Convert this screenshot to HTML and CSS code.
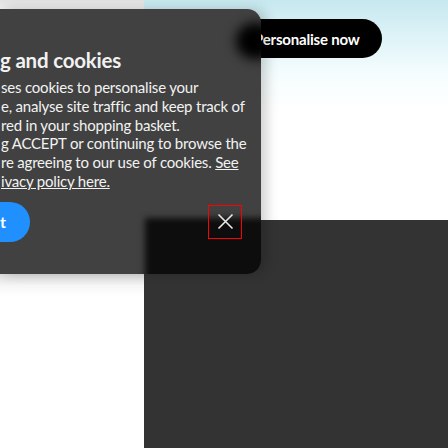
FILE: index.html
```html
<!DOCTYPE html>
<html lang="en">
<head>
<meta charset="utf-8">
<link rel="stylesheet" href="styles.css">
</head>
<body>
<div class="page">
  <div class="bg">
    <div class="bg-left">
      <div class="strip"></div>
      <div class="left-mid"></div>
      <div class="left-bottom"></div>
    </div>
    <div class="bg-right">
      <div class="right-top"></div>
      <div class="right-bottom"></div>
    </div>
  </div>

  <button class="pill">Personalise now</button>

  <section class="panel">
    <div class="blob"></div>
    <div class="shade"></div>
    <h2 class="title">g and cookies</h2>
    <p class="copy">ses cookies to personalise your<br>e, analyse site traffic and keep track of<br>red in your shopping basket.<br>g ACCEPT or continuing to browse the<br>re agreeing to our use of cookies. <a href="#">See</a><br><a href="#">ivacy policy here.</a></p>
    <div class="actions">
      <button class="accept">t</button>
      <button class="close" aria-label="Close">
        <svg width="17" height="17" viewBox="0 0 17 17"><path d="M1.5 1.5 L15.5 15.5 M15.5 1.5 L1.5 15.5" stroke="#e8e8e8" stroke-width="1.6" fill="none"/></svg>
      </button>
    </div>
  </section>
</div>
</body>
</html>
```

FILE: styles.css
```css
* { box-sizing: border-box; }
html, body { margin: 0; padding: 0; }
body { width: 448px; height: 448px; overflow: hidden; font-family: "Lato", "Open Sans", sans-serif; }

.page { position: relative; width: 448px; height: 448px; overflow: hidden; }

.bg { display: grid; grid-template-columns: 144px 1fr; height: 448px; }
.bg-left { display: flex; flex-direction: column; }
.strip { height: 9px; background: linear-gradient(#e2e2e2, #ececec); }
.left-mid { height: 265px; background: #414141; }
.left-bottom { flex: 1; background: linear-gradient(#dcdcdc 0, #f6f6f6 12px, #ffffff 22px); }
.bg-right { display: flex; flex-direction: column; }
.right-top { height: 220px; background: linear-gradient(#c6e8ef 0, #dff4f8 40px, #f6fdfe 75px, #ffffff 110px); }
.right-bottom { flex: 1; background: #333333; }

.pill {
  position: absolute; left: 226px; top: 19px; width: 156px; height: 39px;
  border: 0; border-radius: 20px; background: #000; color: #fff;
  font: 700 15px "Lato", sans-serif; text-align: left; padding: 0 0 0 28px; letter-spacing: -0.2px;
}

.panel {
  position: absolute; left: 0; top: 9px; width: 261px; height: 265px;
  background: #414141; border-radius: 0 14px 14px 0; overflow: hidden;
  box-shadow: 6px 0 12px rgba(0,0,0,0.18);
  color: #f2f2f2;
  display: flex; flex-direction: column;
}
.blob {
  position: absolute; left: 236px; top: 14px; width: 40px; height: 36px;
  background: #000; border-radius: 18px; filter: blur(6px);
}
.shade {
  position: absolute; left: 145px; top: 209px; right: -20px; bottom: -20px;
  background: #0d0d0d; filter: blur(3px);
}
.title { position: relative; margin: 40px 0 0 0; font-size: 20.5px; font-weight: 700; line-height: 22px; letter-spacing: -0.2px; }
.copy { position: relative; margin: 7px 0 0 1px; font-size: 15px; line-height: 18.8px; letter-spacing: -0.2px; }
.copy a { color: inherit; text-decoration: underline; }
.actions { position: relative; display: flex; justify-content: space-between; align-items: center; margin-top: 11px; padding-right: 19px; }
.accept {
  width: 30px; height: 40px; border: 0; border-radius: 0 20px 20px 0; background: #2190ff;
  color: #fff; font: 700 16px "Lato", sans-serif; text-align: left; padding: 0; margin-left: 0;
}
.close {
  width: 34px; height: 34px; border: 1.5px solid #ff0000; background: transparent;
  display: flex; align-items: center; justify-content: center; padding: 0;
}
.close svg { display: block; }
```
